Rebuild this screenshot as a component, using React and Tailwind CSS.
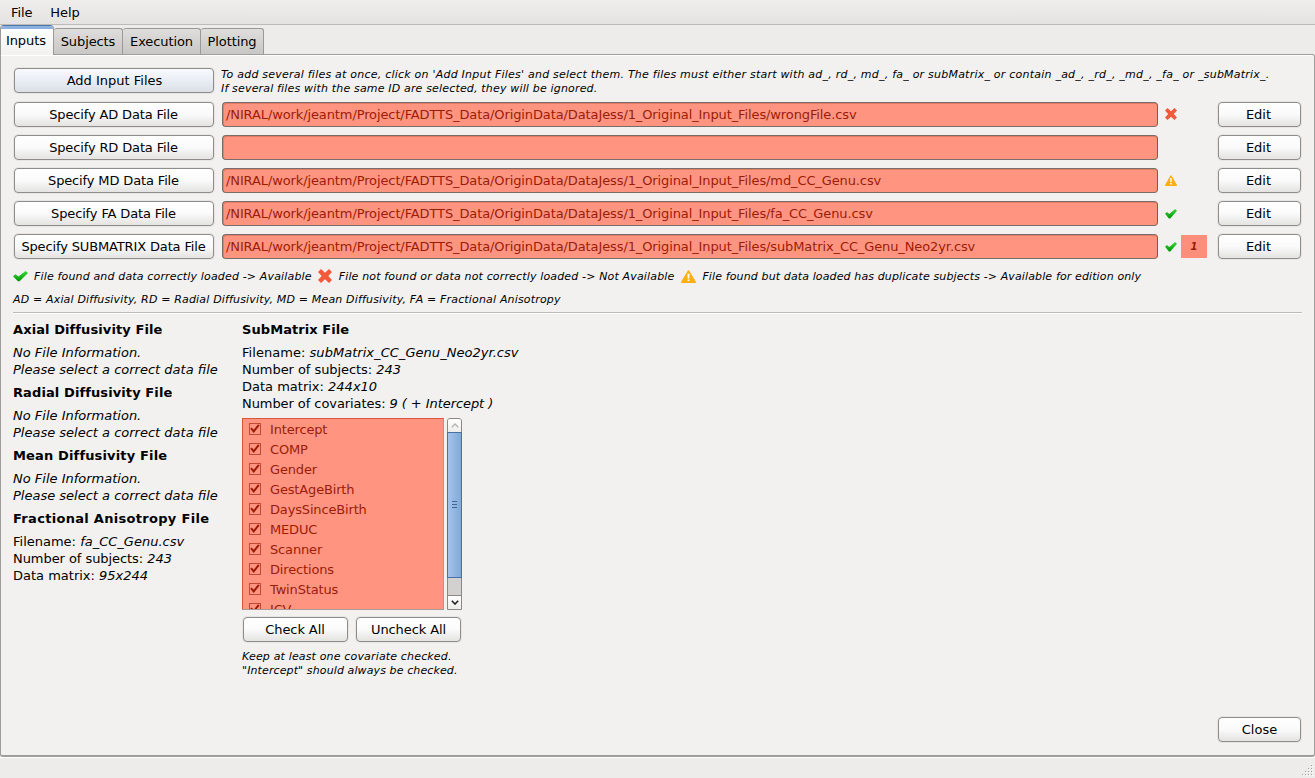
import React from "react";

const DIR = "/NIRAL/work/jeantm/Project/FADTTS_Data/OriginData/DataJess/1_Original_Input_Files/";

const FILE_ROWS = [
  { label: "Specify AD Data File", value: DIR + "wrongFile.csv", state: "error" },
  { label: "Specify RD Data File", value: "", state: "none" },
  { label: "Specify MD Data File", value: DIR + "md_CC_Genu.csv", state: "warning" },
  { label: "Specify FA Data File", value: DIR + "fa_CC_Genu.csv", state: "ok" },
  { label: "Specify SUBMATRIX Data File", value: DIR + "subMatrix_CC_Genu_Neo2yr.csv", state: "ok", badge: "1" },
];

const COVARIATES = [
  "Intercept", "COMP", "Gender", "GestAgeBirth", "DaysSinceBirth",
  "MEDUC", "Scanner", "Directions", "TwinStatus", "ICV",
];

function OkIcon({ className }) {
  return (
    <svg viewBox="0 0 15 12" preserveAspectRatio="none" className={className}>
      <defs>
        <linearGradient id="okFill" x1="0" y1="0" x2="0" y2="1">
          <stop offset="0" stopColor="#2fe033" />
          <stop offset="1" stopColor="#069208" />
        </linearGradient>
      </defs>
      <path d="M0 5.6 2.4 3.6 5.4 6 12.6 0 15 2.2 6.6 11.3H4.9Z" fill="url(#okFill)" />
    </svg>
  );
}

function ErrorIcon({ className }) {
  return (
    <svg viewBox="0 0 14 14" className={className}>
      <path
        d="M3 0 7 3.7 11 0 14 3 10.3 7 14 11 11 14 7 10.3 3 14 0 11 3.7 7 0 3Z"
        fill="#f25a3c"
      />
    </svg>
  );
}

function WarningIcon({ className }) {
  return (
    <svg viewBox="0 0 15 13" preserveAspectRatio="none" className={className}>
      <path d="M7.5 .9 14.3 12.2H.7Z" fill="#ffae13" stroke="#ffae13" strokeWidth="1.4" strokeLinejoin="round" />
      <path d="M6.4 3.8h2.2l-.3 4.6H6.7ZM6.5 9.4h2v1.7h-2Z" fill="#fff" />
    </svg>
  );
}

function StateIcon({ state }) {
  if (state === "ok") return <OkIcon className="h-[10px] w-[12px]" />;
  if (state === "error") return <ErrorIcon className="mb-px size-[12px]" />;
  if (state === "warning") return <WarningIcon className="mb-px h-[11px] w-[12px]" />;
  return null;
}

function Button({ children, className = "", hovered = false }) {
  const fill = hovered
    ? "from-[#f8fafd] via-[#e9edf4] to-[#dcdfe6]"
    : "from-white via-[#fafafa] to-[#e4e3e2]";
  return (
    <button
      className={`flex h-[25px] shrink-0 items-center justify-center whitespace-nowrap rounded-[4px] border border-[#8f8d8b] bg-linear-to-b shadow-[0_0_0_1px_#e6e5e3] ${fill} ${className}`}
    >
      {children}
    </button>
  );
}

function Tab({ children, className }) {
  return (
    <div
      className={`mt-[3px] flex h-[26px] items-center justify-center rounded-t-[3px] border border-b-0 border-l-0 border-[#9b9997] bg-linear-to-b from-[#dfdedc] to-[#c8c7c5] tracking-[-0.1px] ${className}`}
    >
      {children}
    </div>
  );
}

function FileInfo({ title, titleClass = "", children }) {
  return (
    <section>
      <h2 className={`mb-[6px] font-bold leading-[17px] ${titleClass}`}>{title}</h2>
      <div className="whitespace-nowrap leading-[17px]">{children}</div>
    </section>
  );
}

function NoFile() {
  return (
    <div className="italic">
      <p>No File Information.</p>
      <p>Please select a correct data file</p>
    </div>
  );
}

function Check() {
  return (
    <svg viewBox="0 0 13 13" className="mb-px size-[13px] shrink-0">
      <rect x="1.5" y="1.5" width="11" height="11" fill="#ff9581" stroke="#c04a34" />
      <path d="M3 6.2 5.7 9.4 10.8 2.8" fill="none" stroke="#9b1c08" strokeWidth="2" />
    </svg>
  );
}

function Scrollbar() {
  return (
    <div className="flex h-[192px] w-[15px] flex-col rounded-t-[3px] border border-[#8b8987] bg-[#d2d1cf]">
      <div className="flex h-[13px] items-center justify-center rounded-t-[2px] bg-linear-to-b from-white to-[#ededec]">
        <svg viewBox="0 0 8 5" className="h-[5px] w-[8px]">
          <path d="M.8 4.2 4 1 7.2 4.2" fill="none" stroke="#b5b3b1" strokeWidth="1.3" />
        </svg>
      </div>
      <div className="-mx-px flex h-[146px] flex-col items-center justify-center gap-[2px] border border-[#4a71a3] bg-linear-to-r from-[#a5c4eb] to-[#83a7d8] pb-[2px]">
        <div className="h-px w-[5px] bg-[#3e6593]" />
        <div className="h-px w-[5px] bg-[#3e6593]" />
        <div className="h-px w-[5px] bg-[#3e6593]" />
      </div>
      <div className="flex-1" />
      <div className="flex h-[14px] items-center justify-center border-t border-[#8b8987] bg-linear-to-b from-white to-[#ededec]">
        <svg viewBox="0 0 8 5" className="h-[5px] w-[8px]">
          <path d="M.8 .8 4 4 7.2 .8" fill="none" stroke="#222" strokeWidth="1.6" />
        </svg>
      </div>
    </div>
  );
}

function SizeGrip() {
  const dots = [];
  for (let r = 0; r < 4; r++) {
    for (let c = 3 - r; c < 4; c++) dots.push([c * 3, r * 3]);
  }
  return (
    <svg viewBox="0 0 12 12" className="size-[12px]">
      {dots.map(([x, y]) => (
        <g key={`${x}-${y}`}>
          <rect x={x + 1} y={y + 1} width="1" height="1" fill="#fff" />
          <rect x={x} y={y} width="1" height="1" fill="#a5a3a1" />
        </g>
      ))}
    </svg>
  );
}

export default function App() {
  return (
    <div className="flex h-[778px] w-[1315px] flex-col overflow-hidden bg-[#edeceb] font-['DejaVu_Sans',sans-serif] text-[13px] text-black">
      <nav className="flex h-[25px] shrink-0 gap-[18px] border-b border-[#bdbbb9] bg-linear-to-b from-[#efeeed] to-[#e4e3e1] pl-[11px] leading-[25px] tracking-[-0.1px]">
        <span>File</span>
        <span>Help</span>
      </nav>

      <div className="z-10 flex h-[30px] shrink-0">
        <div className="flex h-[30px] w-[54px] flex-col overflow-hidden rounded-t-[4px] border-x border-t border-x-[#9b9997] border-t-[#4f76a9] bg-linear-to-b from-white to-[#f2f1f0] tracking-[-0.1px]">
          <div className="h-[3px] bg-[#8cb1de]" />
          <span className="pl-[5px] pt-[3px] leading-[17px]">Inputs</span>
        </div>
        <Tab className="w-[69px]">Subjects</Tab>
        <Tab className="w-[78px]">Execution</Tab>
        <Tab className="w-[63px]">Plotting</Tab>
      </div>

      <main className="-mt-px flex h-[703px] shrink-0 flex-col rounded-b-[3px] rounded-tr-[3px] border border-b-2 border-[#a09e9c] bg-[#f2f1f0] px-[12px] pt-[13px] shadow-[inset_0_1px_0_#ffffff]">
        <div className="flex h-[26px] items-start">
          <Button className="ml-px w-[200px] pl-px" hovered>Add Input Files</Button>
          <div className="ml-[7px] whitespace-nowrap text-[11px] italic leading-[14px]">
            <p className="tracking-[0.225px]">
              To add several files at once, click on 'Add Input Files' and select them. The files must either start with
              ad_, rd_, md_, fa_ or subMatrix_ or contain _ad_, _rd_, _md_, _fa_ or _subMatrix_.
            </p>
            <p className="tracking-[0.17px]">If several files with the same ID are selected, they will be ignored.</p>
          </div>
        </div>

        <div className="mt-[8px] flex flex-col gap-[8px]">
          {FILE_ROWS.map((row) => (
            <div key={row.label} className="flex h-[25px] items-center">
              <Button className="ml-px w-[200px] pr-px tracking-[-0.14px]">{row.label}</Button>
              <div className="ml-[8px] h-[25px] w-[936px] whitespace-nowrap rounded-[4px] border border-[#776e6a] border-r-[#b9432f] bg-[#ff9581] pl-[3px] leading-[23px] tracking-[-0.11px] text-[#9b1c08] shadow-[inset_1px_1px_0_#e27d69]">
                {row.value}
              </div>
              <div className="ml-[7px] flex w-[16px] items-center">
                <StateIcon state={row.state} />
              </div>
              <div className="flex w-[37px]">
                {row.badge && (
                  <span className="flex h-[23px] w-[26px] items-center justify-center bg-[#fc8f7b] pb-px text-[10px] font-bold italic text-[#9b1c08]">
                    {row.badge}
                  </span>
                )}
              </div>
              <Button className="w-[83px] pr-[2px]">Edit</Button>
            </div>
          ))}
        </div>

        <div className="mt-[10px] flex h-[15px] items-center whitespace-nowrap text-[11px] italic tracking-[0.155px]">
          <OkIcon className="mb-px mr-[6px] h-[11px] w-[15px]" />
          <span className="pt-px">File found and data correctly loaded -&gt; Available</span>
          <ErrorIcon className="mb-px ml-[6px] mr-[7px] size-[14px]" />
          <span className="pt-px">File not found or data not correctly loaded -&gt; Not Available</span>
          <WarningIcon className="mb-px ml-[7px] mr-[6px] h-[13px] w-[15px]" />
          <span className="pt-px tracking-[0.125px]">File found but data loaded has duplicate subjects -&gt; Available for edition only</span>
        </div>
        <p className="mt-[8px] text-[11px] italic leading-[15px] tracking-[0.165px]">
          AD = Axial Diffusivity, RD = Radial Diffusivity, MD = Mean Diffusivity, FA = Fractional Anisotropy
        </p>
        <div className="mt-[5px] h-[2px] shrink-0 border-b border-t border-b-white border-t-[#bdbbb9]" />

        <div className="mt-[7px] flex">
          <div className="flex w-[229px] flex-col gap-[6px]">
            <FileInfo title="Axial Diffusivity File" titleClass="tracking-[0.09px]"><NoFile /></FileInfo>
            <FileInfo title="Radial Diffusivity File" titleClass="tracking-[0.1px]"><NoFile /></FileInfo>
            <FileInfo title="Mean Diffusivity File" titleClass="tracking-[0.15px]"><NoFile /></FileInfo>
            <FileInfo title="Fractional Anisotropy File" titleClass="tracking-[0.3px]">
              <p>Filename: <i>fa_CC_Genu.csv</i></p>
              <p className="tracking-[-0.06px]">Number of subjects: <i>243</i></p>
              <p>Data matrix: <i>95x244</i></p>
            </FileInfo>
          </div>

          <div>
            <FileInfo title="SubMatrix File" titleClass="tracking-[0.07px]">
              <p className="tracking-[0.04px]">Filename: <i>subMatrix_CC_Genu_Neo2yr.csv</i></p>
              <p className="tracking-[-0.06px]">Number of subjects: <i>243</i></p>
              <p>Data matrix: <i>244x10</i></p>
              <p className="tracking-[-0.07px]">Number of covariates: <i>9 ( + Intercept )</i></p>
            </FileInfo>
            <div className="mt-[6px] flex gap-[3px]">
              <div className="h-[192px] w-[202px] overflow-hidden border border-[#d8553e] border-b-[#a89a94] border-r-[#a89a94] bg-[#ff9581] pl-[5px] text-[#9b1c08]">
                {COVARIATES.map((name) => (
                  <div key={name} className="flex h-[20px] items-center gap-[9px] leading-[20px] tracking-[-0.16px]">
                    <Check />
                    <span className="pt-px">{name}</span>
                  </div>
                ))}
              </div>
              <Scrollbar />
            </div>
            <div className="ml-px mt-[7px] flex gap-[8px]">
              <Button className="w-[105px] pr-px tracking-[-0.1px]">Check All</Button>
              <Button className="w-[105px] tracking-[-0.1px]">Uncheck All</Button>
            </div>
            <div className="mt-[8px] whitespace-nowrap text-[11px] italic leading-[14px]">
              <p className="tracking-[0.16px]">Keep at least one covariate checked.</p>
              <p className="tracking-[0.11px]">"Intercept" should always be checked.</p>
            </div>
          </div>
        </div>

        <div className="mb-[13px] mt-auto flex justify-end pr-px">
          <Button className="w-[83px]">Close</Button>
        </div>
      </main>

      <footer className="flex flex-1 items-end justify-end border-t border-white pb-px pr-px">
        <SizeGrip />
      </footer>
    </div>
  );
}
